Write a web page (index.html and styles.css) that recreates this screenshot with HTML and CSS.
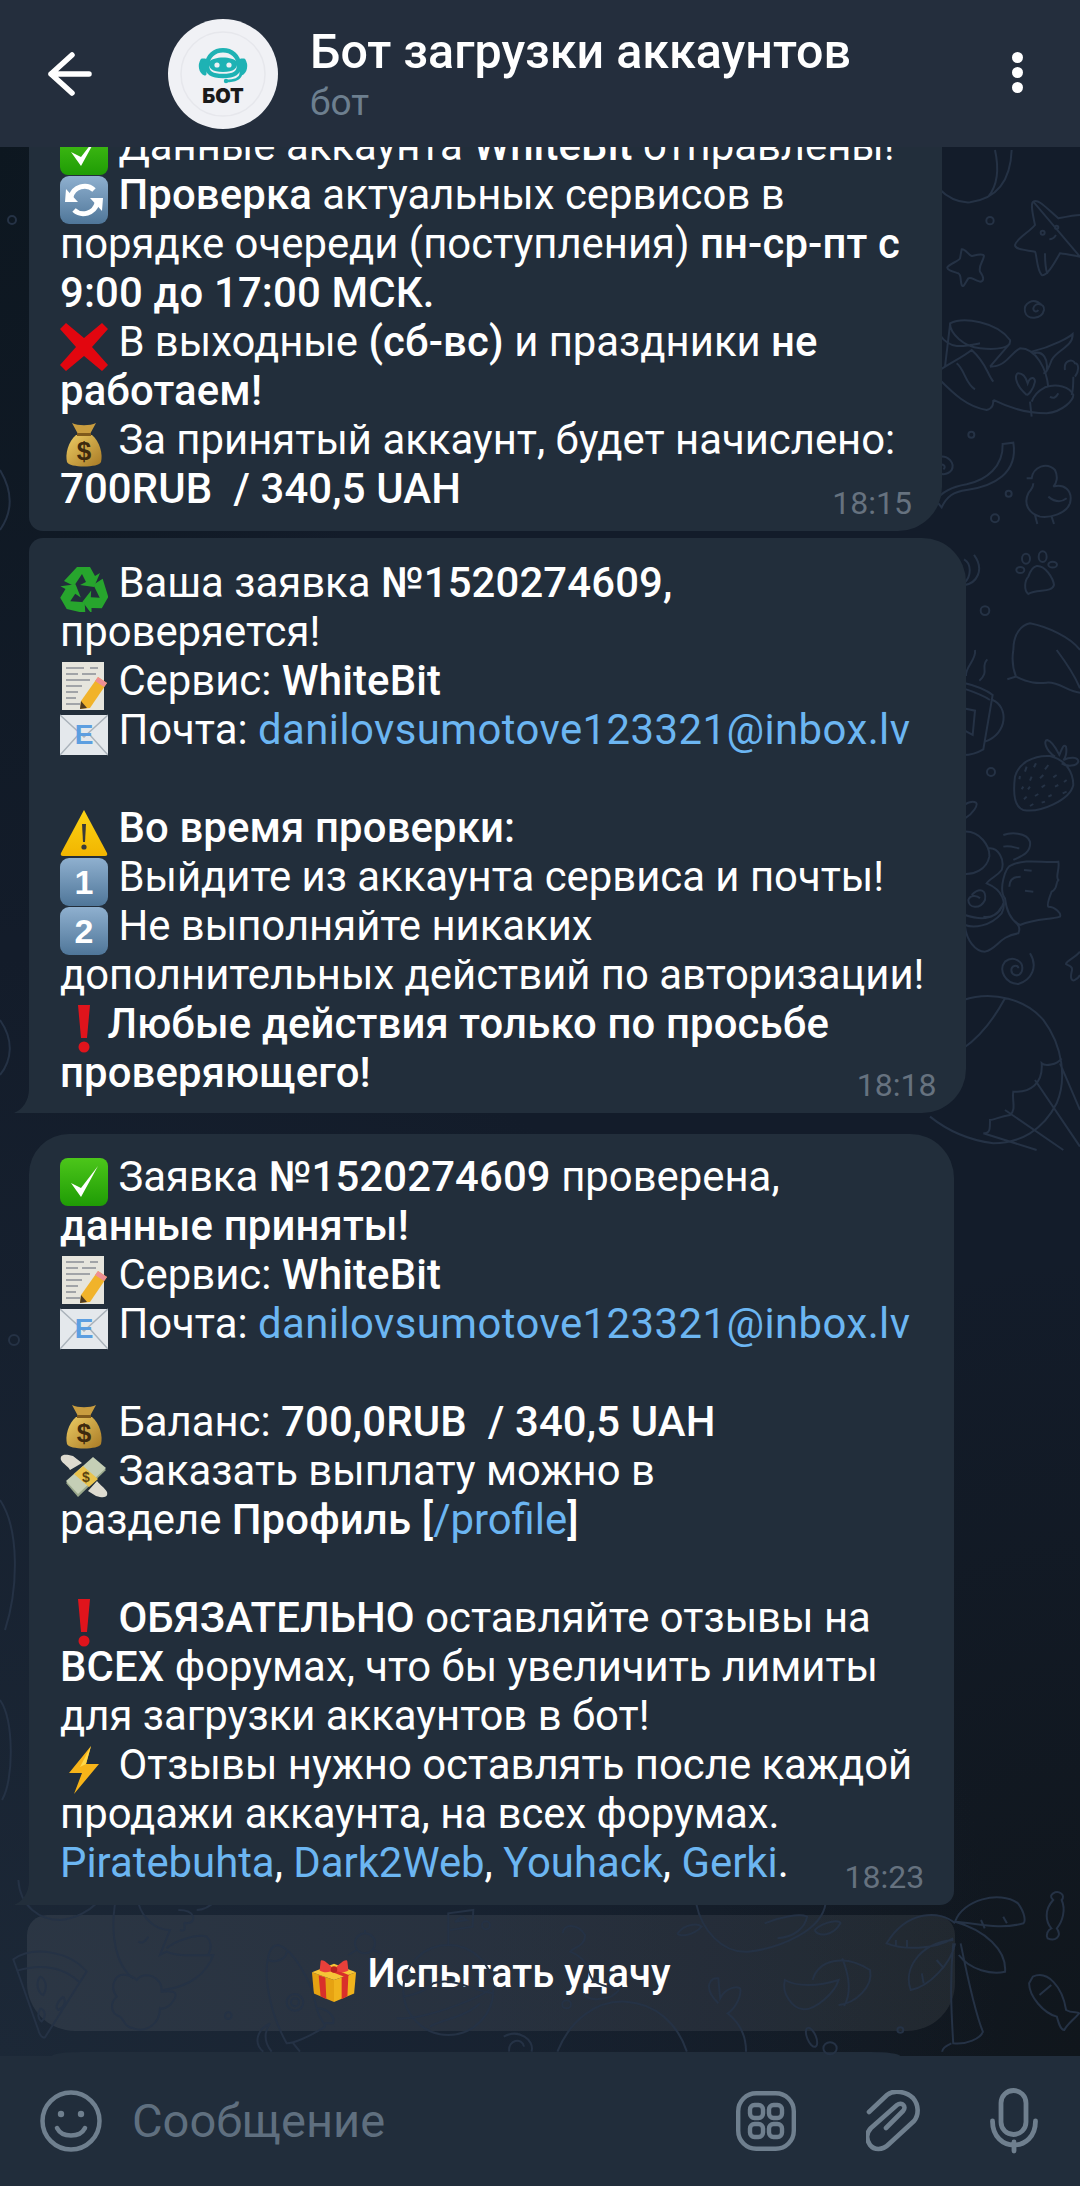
FILE: index.html
```html
<!DOCTYPE html>
<html lang="ru">
<head>
<meta charset="utf-8">
<title>Бот загрузки аккаунтов</title>
<link rel="stylesheet" href="styles.css">
</head>
<body>
<svg class="defs" aria-hidden="true">
  <defs>
    <linearGradient id="gGreen" x1="0" y1="0" x2="0" y2="1"><stop offset="0" stop-color="#4cc61a"/><stop offset="1" stop-color="#1f9c05"/></linearGradient>
    <linearGradient id="gKey" x1="0" y1="0" x2="0" y2="1"><stop offset="0" stop-color="#8fb0cf"/><stop offset="1" stop-color="#4f7699"/></linearGradient>
    <linearGradient id="gBag" x1="0" y1="0" x2="1" y2="1"><stop offset="0" stop-color="#eccb63"/><stop offset="1" stop-color="#a87a25"/></linearGradient>
    <linearGradient id="gYel" x1="0" y1="0" x2="0" y2="1"><stop offset="0" stop-color="#fbd415"/><stop offset="1" stop-color="#f2b500"/></linearGradient>
    <symbol id="e-check" viewBox="0 0 48 48"><rect x="0" y="0" width="48" height="48" rx="8" fill="url(#gGreen)"/><path d="M11 25 L21 39 L38 8 L21 30 Z" fill="#fff"/></symbol>
    <symbol id="e-cycle" viewBox="0 0 48 48"><rect x="0" y="0" width="48" height="48" rx="9" fill="url(#gKey)"/><path d="M11 21 A14 14 0 0 1 34 14" fill="none" stroke="#fff" stroke-width="5"/><path d="M37 27 A14 14 0 0 1 14 34" fill="none" stroke="#fff" stroke-width="5"/><path d="M6 13 L18 26 L5 26 Z M42 35 L30 22 L43 22 Z" fill="#fff"/></symbol>
    <symbol id="e-cross" viewBox="0 0 48 48"><path d="M6 0 L24 15 L42 0 L48 6 L32 24 L48 42 L42 48 L24 33 L6 48 L0 42 L16 24 L0 6 Z" fill="#e2060f"/></symbol>
    <symbol id="e-bag" viewBox="0 0 48 48"><path d="M16 14 C8 21 5 33 7 41 C9 47 39 47 41 41 C43 33 40 21 32 14 Z" fill="url(#gBag)"/><path d="M12 2 C18 5 30 5 36 2 L30 13 L18 13 Z" fill="#c99d3f"/><path d="M17 12 H31 V15 H17 Z" fill="#7f5a1c"/><text x="24" y="39" class="e-dollar">$</text></symbol>
    <symbol id="e-recycle" viewBox="0 0 48 48"><g fill="#27a52d"><path id="rc" d="M17 3 H30 L35 12 L40 9 L34 23 L20 21 L26 18 L22 10 L14 22 L4 17 Z"/><use href="#rc" transform="rotate(120 24 27)"/><use href="#rc" transform="rotate(240 24 27)"/></g></symbol>
    <symbol id="e-memo" viewBox="0 0 48 48"><rect x="2" y="0" width="42" height="48" fill="#e6e5dd"/><path d="M6 6 H24 M30 6 H38 M6 12 H18 M22 12 H36 M6 18 H30 M6 24 H22 M6 30 H18 M6 36 H16 M6 42 H20" stroke="#8b8f96" stroke-width="1.6" fill="none"/><path d="M38 15 L47 21 L30 46 L20 47 L21 39 Z" fill="#f1b32a"/><path d="M38 15 L47 21 L44 25 L35 19 Z" fill="#ef8f94"/><path d="M21 39 L20 47 L27 46 Z" fill="#4e3b22"/></symbol>
    <symbol id="e-mail" viewBox="0 0 48 48"><rect x="0" y="4" width="48" height="40" fill="#e4e8ec"/><path d="M0 4 L24 26 L48 4 M0 44 L19 23 M48 44 L29 23" stroke="#aab3bb" stroke-width="1.5" fill="none"/><text x="24" y="33" class="e-letter">E</text></symbol>
    <symbol id="e-warn" viewBox="0 0 48 48"><path d="M24 1 L47 44 Q48 47 45 47 H3 Q0 47 1 44 Z" fill="url(#gYel)"/><path d="M22 15 H26 L25 33 H23 Z" fill="#3a3a38"/><circle cx="24" cy="38" r="2.6" fill="#3a3a38"/></symbol>
    <symbol id="e-k1" viewBox="0 0 48 48"><rect x="0" y="0" width="48" height="48" rx="9" fill="url(#gKey)"/><text x="24" y="36" class="e-digit">1</text></symbol>
    <symbol id="e-k2" viewBox="0 0 48 48"><rect x="0" y="0" width="48" height="48" rx="9" fill="url(#gKey)"/><text x="24" y="36" class="e-digit">2</text></symbol>
    <symbol id="e-excl" viewBox="0 0 48 48"><path d="M18 0 H30 L27 33 H21 Z" fill="#e0141c"/><circle cx="24" cy="42" r="5.5" fill="#e0141c"/></symbol>
    <symbol id="e-fly" viewBox="0 0 48 48"><path d="M13 4 C2 1 0 4 1 8 C3 12 8 14 10 18 L22 11 Z M36 44 C46 47 48 44 47 40 C45 36 40 33 37 29 L28 39 Z" fill="#dedbd0"/><path d="M6 31 L33 7 L46 18 L18 45 Z" fill="#9aa88c"/><path d="M6 29 L33 5 L46 16 L18 42 Z" fill="#c5cfb6"/><path d="M14 22 L23 14 L38 27 L29 35 Z" fill="#e9c34d"/><text x="26" y="30" class="e-usd">$</text></symbol>
    <symbol id="e-bolt" viewBox="0 0 48 48"><path d="M31 0 L9 27 L22 27 L14 48 L39 18 L26 18 Z" fill="#f7b419"/><path d="M31 0 L26 18 L20 21 Z" fill="#ffd84a"/></symbol>
    <symbol id="e-gift" viewBox="0 0 48 48"><path d="M1 16 L24 24 L24 47 L3 38 Z" fill="#e6a212"/><path d="M47 16 L24 24 L24 47 L45 38 Z" fill="#f0b31c"/><path d="M1 16 L24 7 L47 16 L24 24 Z" fill="#f6c537"/><path d="M8 19 L15 21.5 L16 44 L10 41 Z M32 21 L39 19 L38 41 L32 44 Z" fill="#d92f2a"/><path d="M10 11 L36 21 L40 19 L16 9 Z" fill="#d92f2a"/><path d="M24 13 C16 4 10 1 10 5 L9 14 C14 17 20 16 24 13 C28 16 34 17 39 14 L38 5 C38 1 32 4 24 13 Z" fill="#e8403a"/><circle cx="24" cy="13" r="3.4" fill="#b9231f"/></symbol>
  </defs>
</svg>

<div class="phone">
  <header class="topbar">
    <svg class="back" viewBox="0 0 44 44"><path d="M3 22 H41 M24 3 L3 22 L24 41" fill="none" stroke="#fff" stroke-width="5.5" stroke-linecap="round" stroke-linejoin="round"/></svg>
    <svg class="avatar" viewBox="0 0 110 110">
      <circle cx="55" cy="55" r="55" fill="#f0f1f5"/>
      <circle cx="55" cy="55" r="42" fill="none" stroke="#e6e7ec" stroke-width="1.5"/>
      <path d="M39 47 C39 26 71 26 71 47 C71 54 66 57 55 57 C44 57 39 54 39 47 Z" fill="none" stroke="#1eb2b4" stroke-width="4.5"/>
      <path d="M41 43 C45 37 65 37 69 43 C70 49 66 53 55 53 C44 53 40 49 41 43 Z" fill="#1eb2b4"/>
      <circle cx="49" cy="46" r="2.6" fill="#f0f1f5"/><circle cx="61" cy="46" r="2.6" fill="#f0f1f5"/>
      <path d="M34 41 C31 46 32 53 37 55 L37 41 Z M76 41 C79 46 78 53 73 55 L73 41 Z" fill="#1eb2b4" stroke="#1eb2b4" stroke-width="3" stroke-linejoin="round"/>
      <path d="M73 55 C72 60 66 62 58 62" fill="none" stroke="#1eb2b4" stroke-width="2.5"/>
      <circle cx="58" cy="62" r="2.2" fill="#1eb2b4"/>
      <text x="55" y="84" class="avatar-label">БОТ</text>
    </svg>
    <div class="peer">
      <div class="peer-name">Бот загрузки аккаунтов</div>
      <div class="peer-status">бот</div>
    </div>
    <div class="dots"><i></i><i></i><i></i></div>
  </header>

  <main class="chat">
    <svg class="doodles" viewBox="0 147 1080 1909" aria-hidden="true">
      <g transform="translate(930,150) scale(0.3333)">
        <path d="M25 115 Q70 160 120 157 Q240 140 245 0 M175 140 Q215 90 195 0"/>
        <path d="M310 155 C325 145 350 175 385 205 C410 200 440 195 450 195 M450 320 C420 315 395 310 390 310 C370 345 350 380 335 375 C320 360 320 310 315 305 C290 300 255 300 255 285 C260 265 300 245 315 225 C310 200 300 160 310 155 Z M358 268 Q370 268 378 255 M345 310 Q345 350 352 372"/>
        <circle cx="338" cy="248" r="6"/><circle cx="380" cy="232" r="5"/>
        <path d="M95 298 C105 295 115 315 125 318 C140 315 160 310 162 318 C160 335 145 345 150 365 C165 385 160 395 150 395 C130 390 125 380 115 385 C105 400 100 415 95 405 C90 390 95 375 85 370 C70 365 50 360 52 352 C60 340 85 335 90 325 Z"/>
        <circle cx="180" cy="212" r="11"/>
        <path d="M335 465 C310 440 280 460 285 485 C290 510 335 510 342 480 C345 460 315 455 310 475 C310 485 320 488 325 480"/>
        <path d="M60 520 C100 500 200 515 240 570 C245 595 200 600 150 595 C100 590 60 550 60 520 Z M60 525 L45 650 M240 580 L180 650 M30 555 C60 600 100 590 150 580 M30 660 C60 640 100 620 125 600 C170 640 170 670 190 695 M80 640 C105 660 105 700 135 718 M30 690 C70 730 110 770 170 780 C190 775 190 760 190 750 M190 750 C250 780 300 790 350 790 C400 785 430 750 430 735 C420 710 380 700 345 712 C320 725 310 740 305 755 M180 650 C230 650 240 610 270 595 C320 595 350 660 355 712 M305 605 C370 590 420 560 428 552 C430 590 380 600 365 630 C350 670 345 670 340 670 M310 610 C340 600 355 630 350 660"/>
        <path d="M290 735 C250 700 255 670 265 670 C285 670 290 690 293 700 C300 680 315 680 315 695 C310 720 295 735 290 735 M405 660 C400 630 430 625 435 640 C445 640 450 660 435 680 M430 680 C430 710 430 720 425 735 M300 755 L305 800 M360 740 Q375 750 385 730"/>
        <circle cx="124" cy="854" r="9"/><circle cx="236" cy="1031" r="9"/><circle cx="195" cy="1105" r="12"/><circle cx="165" cy="1382" r="13"/>
        <path d="M218 882 L250 878 C265 970 190 1010 110 1020 C70 1025 50 1040 35 1072 L18 1052 C35 1025 70 1010 110 1003 C170 990 220 950 218 882 Z"/>
        <path d="M28 920 C55 915 75 940 65 960 C50 980 28 970 28 970 M28 945 C40 940 50 950 40 958"/>
        <path d="M290 985 L305 985 C310 950 350 935 375 960 C385 980 380 1000 370 1010 C400 1000 430 1020 420 1060 C410 1090 360 1105 330 1100 C295 1090 280 1060 295 1030 C305 1015 310 1015 310 1000 M355 1040 Q385 1065 410 1045 M315 1095 L322 1122 M365 1100 L372 1122"/>
        <path d="M320 1248 C345 1245 370 1285 372 1305 C365 1330 320 1315 295 1332 C280 1320 285 1290 295 1280 C300 1265 310 1250 320 1248 Z"/>
        <ellipse cx="288" cy="1226" rx="12" ry="15"/><ellipse cx="338" cy="1220" rx="12" ry="16"/><ellipse cx="368" cy="1244" rx="13" ry="9"/><ellipse cx="271" cy="1260" rx="12" ry="9"/>
        <path d="M102 1228 C125 1240 125 1280 102 1300 M132 1215 C165 1260 140 1300 102 1306 M250 1500 C250 1450 275 1425 300 1420 C350 1430 420 1460 450 1500"/>
      </g>
      <g transform="translate(930,650) scale(0.3333)">
        <path d="M250 0 C245 30 250 60 258 80 M232 88 L258 80 C300 100 320 100 350 98 C390 95 410 125 450 128 M380 0 C410 40 440 90 450 115"/>
        <path d="M100 98 C130 105 170 120 188 135 L160 298 C140 310 120 315 100 315 M188 150 C235 170 235 250 165 275 M100 115 C130 125 160 135 180 150 M100 175 L135 182 L128 255 L100 240"/>
        <path d="M135 0 C140 30 105 50 108 78 M172 28 C150 50 180 65 148 92"/>
        <path d="M360 318 C410 330 430 370 430 405 C420 450 330 490 280 480 C250 470 250 420 255 380 C265 340 310 315 360 318 Z M375 320 C345 300 340 270 352 270 C370 275 385 310 388 315 C395 300 400 280 408 290 C412 310 405 325 400 330 C420 320 445 320 445 335 C440 350 410 350 395 340 M290 350 L285 365 M318 340 L312 352 M355 345 L345 358 M270 378 L268 388 M305 380 L300 392 M340 375 L330 385 M380 375 L370 382 M280 410 L275 418 M300 410 L294 418 M345 405 L335 412 M385 405 L375 410 M410 390 L402 396 M290 440 L282 448 M325 432 L315 438 M365 435 L355 440 M410 425 L398 430 M310 462 L300 468 M345 455 L335 458"/>
        <circle cx="183" cy="366" r="12"/>
        <path d="M105 505 C130 490 145 465 138 458 C125 450 110 460 102 465 M100 545 C150 540 180 590 178 620 C170 660 130 675 100 672 M175 595 C205 590 225 630 215 660 C200 680 180 685 170 700 C220 720 230 760 215 790 C180 830 130 835 105 825 M105 830 C110 870 135 905 165 905 C205 895 205 860 265 850 C275 830 260 820 255 815"/>
        <path d="M245 645 C290 625 340 640 385 635 C390 660 375 680 385 690 C375 700 385 715 365 725 C355 750 350 765 355 770 C375 770 395 790 390 800 C360 810 320 805 270 825 C250 815 230 790 225 745 C205 720 225 650 245 645 Z M282 660 L305 662 M285 722 L310 725 M238 710 C238 690 250 680 272 680"/>
        <path d="M220 555 C240 548 290 545 300 575 C305 610 270 620 250 630 M220 590 C240 585 260 595 268 595"/>
        <path d="M125 735 C150 710 170 720 165 750 C150 780 115 775 115 750 C120 735 140 735 150 745 M105 795 C150 810 195 810 215 770 M160 800 C180 805 210 795 220 760"/>
        <path d="M300 910 C325 950 305 990 265 1002 C225 1000 205 960 225 935 C250 915 285 935 275 965 C265 985 240 975 245 955 C250 945 265 945 265 955"/>
        <path d="M450 905 C435 925 410 930 408 942 C420 950 430 950 425 965 C420 985 425 995 435 990 C445 985 450 975 450 975"/>
        <path d="M100 1050 C190 1020 290 1050 340 1110 C400 1190 410 1290 380 1360 C340 1440 270 1480 190 1480 C110 1470 50 1440 0 1400 M225 1045 C190 1110 150 1160 100 1195 M395 1225 C380 1245 345 1250 335 1240 C340 1300 300 1330 250 1325 C245 1350 260 1380 240 1395 C210 1400 190 1410 180 1410 C180 1440 180 1450 160 1450 M390 1240 L450 1380 M315 1290 L450 1490 M225 1380 L400 1500 M160 1450 L320 1500"/>
      </g>
      <g transform="translate(0,1880) scale(0.3333)">
        <path d="M55 0 C60 80 120 120 180 120 C230 115 270 90 290 70"/>
        <path d="M40 238 C100 195 210 215 260 275 L135 472 C130 475 120 470 115 450 Z M52 272 C110 255 180 255 237 305 M120 290 C105 310 115 340 130 345 C145 320 135 295 120 290 M190 350 C170 365 165 385 175 390 C190 385 200 365 190 350 M122 385 C110 400 115 420 125 425 C140 410 135 390 122 385"/>
        <path d="M345 70 C330 170 350 260 400 295 M415 70 C430 120 470 150 510 150 L480 225 L500 215 C530 230 580 225 640 225 C620 280 570 320 490 330 M500 205 C520 185 590 160 620 170 C640 190 630 215 625 225 M535 90 C590 90 590 130 560 130 C540 120 570 160 540 150 M590 90 C620 90 640 70 650 60 M415 185 Q430 195 445 170"/>
        <path d="M345 300 C360 270 400 290 410 300 C430 270 490 290 485 335 C530 330 540 340 510 375 C490 390 480 385 480 385 C480 430 440 460 400 445 C370 440 375 420 360 410 C330 400 330 370 350 350 C335 330 340 310 345 300 Z"/>
        <circle cx="685" cy="407" r="10"/><circle cx="1458" cy="136" r="12"/>
        <path d="M835 195 C880 210 935 300 950 385 C960 425 975 425 975 440 C930 470 880 490 860 490 C810 400 790 290 805 230 C810 205 820 195 835 195 Z M805 240 C830 250 860 235 860 215 M950 385 C985 385 1005 410 1000 430 L975 430 M810 430 C770 450 760 490 790 515 M810 430 C790 460 795 490 815 515 M880 490 L900 515"/>
        <circle cx="885" cy="367" r="25"/><circle cx="885" cy="367" r="12"/>
        <circle cx="1345" cy="330" r="135"/>
        <path d="M1345 195 L1345 100 L1420 90 L1418 140 L1350 150 M1365 125 L1385 110 L1400 120 Z M1210 350 C1270 340 1290 320 1300 310 C1360 290 1410 330 1480 340 M1190 415 C1280 420 1450 350 1480 320 M1290 440 C1320 420 1400 410 1440 370"/>
        <circle cx="1095" cy="190" r="30"/><path d="M1095 160 L1095 150 M1120 210 L1145 220 M1070 210 L1045 225"/>
      </g>
      <g transform="translate(500,1880) scale(0.37,0.3333)">
        <path d="M530 70 C545 150 600 220 670 215 C760 205 870 150 880 70 M480 160 C500 130 535 130 545 140 C520 170 480 170 480 160 M715 130 C760 110 810 100 830 110 C825 140 800 170 750 175 M850 150 C880 120 920 120 920 130 C900 170 860 170 850 150"/>
        <path d="M1230 125 C1250 60 1350 30 1400 70 C1420 100 1420 125 1415 130 C1350 150 1290 130 1230 125 Z M1230 125 C1310 150 1370 210 1365 275 C1330 285 1270 270 1240 225 M1230 130 C1190 90 1100 90 1045 190 C1090 210 1170 210 1225 175 M1225 180 C1130 190 1090 270 1110 330 C1160 320 1220 250 1230 190 M1225 190 C1215 300 1220 400 1225 490 C1260 495 1300 475 1305 455 C1285 400 1265 300 1245 190 M1300 120 L1310 145 M1360 110 L1370 130 M1070 180 L1070 200 M1100 180 L1100 205 M1180 240 L1200 265 M1140 280 L1145 310 M1220 490 C1200 500 1195 510 1195 515"/>
        <path d="M1495 40 C1510 30 1530 45 1518 60 C1530 90 1520 125 1505 145 C1520 170 1500 185 1480 175 C1475 165 1480 150 1490 145 C1475 125 1470 90 1495 60 C1485 50 1490 45 1495 40 Z"/>
        <path d="M1440 290 C1480 270 1520 320 1530 390 C1545 400 1560 395 1565 400 C1550 420 1535 430 1525 450 C1515 450 1510 430 1505 410 C1470 400 1430 350 1430 310 Z M1490 315 L1458 345"/>
        <path d="M770 300 C800 320 860 320 915 300 C905 340 850 390 820 388 C790 385 760 340 770 300 Z M845 300 C860 240 930 220 1000 270 C1010 320 960 370 915 375 M925 235 C945 290 950 340 930 378"/>
        <path d="M155 515 C190 420 260 360 340 365 C420 370 480 430 505 515 M590 370 C545 320 570 290 590 295 L595 355 C610 320 650 315 650 330 C650 360 630 390 615 400 C650 430 665 470 665 515"/>
        <path d="M170 160 C170 130 210 130 230 165 C230 200 200 200 190 215 C240 240 230 260 250 300 C300 340 350 310 300 350 C270 360 240 365 225 340"/>
        <path d="M10 470 C50 445 95 480 85 515 M25 515 C20 480 60 470 65 500"/>
        <ellipse cx="842" cy="472" rx="12" ry="30" transform="rotate(-20 842 472)"/>
        <circle cx="892" cy="505" r="18"/><circle cx="180" cy="373" r="12"/><circle cx="1082" cy="450" r="8"/>
      </g>
      <g class="doodle-left">
        <path d="M0 470 C12 490 14 510 0 530 M0 1020 C14 1040 12 1060 0 1075 M0 1500 C20 1530 18 1590 5 1630 M0 1700 C14 1720 14 1780 2 1800"/>
        <circle cx="12" cy="220" r="4"/><circle cx="14" cy="1340" r="5"/>
      </g>
    </svg>

    <article class="bubble">
      <p class="msg"><svg class="em"><use href="#e-check"/></svg> Данные аккаунта <b>WhiteBit</b> отправлены!<br>
      <svg class="em"><use href="#e-cycle"/></svg> <b>Проверка</b> актуальных сервисов в<br>
      порядке очереди (поступления) <b>пн-ср-пт с<br>
      9:00 до 17:00 МСК.</b><br>
      <svg class="em"><use href="#e-cross"/></svg> В выходные <b>(сб-вс)</b> и праздники <b>не<br>
      работаем!</b><br>
      <svg class="em"><use href="#e-bag"/></svg> За принятый аккаунт, будет начислено:<br>
      <b>700RUB&nbsp; / 340,5 UAH</b></p>
      <time class="stamp">18:15</time>
    </article>

    <article class="bubble bubble-tail bubble-second">
      <p class="msg"><svg class="em"><use href="#e-recycle"/></svg> Ваша заявка <b>№1520274609,</b><br>
      проверяется!<br>
      <svg class="em"><use href="#e-memo"/></svg> Сервис: <b>WhiteBit</b><br>
      <svg class="em"><use href="#e-mail"/></svg> Почта: <a class="mail">danilovsumotove123321@inbox.lv</a><br>
      <br>
      <svg class="em"><use href="#e-warn"/></svg> <b>Во время проверки:</b><br>
      <svg class="em"><use href="#e-k1"/></svg> Выйдите из аккаунта сервиса и почты!<br>
      <svg class="em"><use href="#e-k2"/></svg> Не выполняйте никаких<br>
      дополнительных действий по авторизации!<br>
      <svg class="em em-narrow"><use href="#e-excl"/></svg> <b>Любые действия только по просьбе<br>
      проверяющего!</b></p>
      <time class="stamp">18:18</time>
    </article>

    <article class="bubble bubble-tail bubble-third">
      <p class="msg"><svg class="em"><use href="#e-check"/></svg> Заявка <b>№1520274609</b> проверена,<br>
      <b>данные приняты!</b><br>
      <svg class="em"><use href="#e-memo"/></svg> Сервис: <b>WhiteBit</b><br>
      <svg class="em"><use href="#e-mail"/></svg> Почта: <a class="mail">danilovsumotove123321@inbox.lv</a><br>
      <br>
      <svg class="em"><use href="#e-bag"/></svg> Баланс: <b>700,0RUB&nbsp; / 340,5 UAH</b><br>
      <svg class="em"><use href="#e-fly"/></svg> Заказать выплату можно в<br>
      разделе <b>Профиль [</b><a>/profile</a><b>]</b><br>
      <br>
      <svg class="em"><use href="#e-excl"/></svg> <b>ОБЯЗАТЕЛЬНО</b> оставляйте отзывы на<br>
      <b>ВСЕХ</b> форумах, что бы увеличить лимиты<br>
      для загрузки аккаунтов в бот!<br>
      <svg class="em"><use href="#e-bolt"/></svg> Отзывы нужно оставлять после каждой<br>
      продажи аккаунта, на всех форумах.<br>
      <a>Piratebuhta</a>, <a>Dark2Web</a>, <a>Youhack</a>, <a>Gerki</a>.</p>
      <time class="stamp">18:23</time>
    </article>

    <button class="kb-btn"><svg class="em em-gift"><use href="#e-gift"/></svg> Испытать удачу</button>
    <div class="kb-next"></div>
  </main>

  <footer class="composer">
    <svg class="ic-smile" viewBox="0 0 62 62"><circle cx="31" cy="31" r="28.5" fill="none" stroke-width="4.5"/><circle cx="21" cy="24" r="3.2" class="ic-fill"/><circle cx="41" cy="24" r="3.2" class="ic-fill"/><path d="M17 38 C22 48 40 48 45 38" fill="none" stroke-width="4.5" stroke-linecap="round"/></svg>
    <div class="placeholder">Сообщение</div>
    <svg class="ic-grid" viewBox="0 0 60 60"><rect x="2.2" y="2.2" width="55.6" height="55.6" rx="18" fill="none" stroke-width="4.4"/><rect x="14" y="14" width="13" height="13" rx="4.5" fill="none" stroke-width="4.4"/><rect x="33" y="14" width="13" height="13" rx="4.5" fill="none" stroke-width="4.4"/><rect x="14" y="33" width="13" height="13" rx="4.5" fill="none" stroke-width="4.4"/><rect x="33" y="33" width="13" height="13" rx="4.5" fill="none" stroke-width="4.4"/></svg>
    <svg class="ic-clip" viewBox="0 0 54 62"><path d="M3 22 L21 5 C28 -1 41 2 47 8 C53 15 53 25 48 31 L23 54 C16 61 8 60 4 55 C0 49 0 43 5 38 L31 15 C36 11 41 17 37 21 L20 38" fill="none" stroke-width="4.6" stroke-linecap="round" stroke-linejoin="round"/></svg>
    <svg class="ic-mic" viewBox="0 0 48 66"><rect x="11" y="2.5" width="25" height="44" rx="12.5" fill="none" stroke-width="4.8"/><path d="M2.5 33 C2.5 65 45.5 65 45.5 33 M24 54 V63" fill="none" stroke-width="4.8" stroke-linecap="round"/></svg>
  </footer>
</div>
</body>
</html>
```

FILE: styles.css
```css
* { box-sizing: border-box; }
html, body { margin: 0; padding: 0; background: #0f1823; }
body { font-family: Roboto, "Noto Sans", "Liberation Sans", sans-serif; color: #fff; }

.defs { position: absolute; width: 0; height: 0; }
.e-dollar, .e-letter, .e-digit, .e-usd { font-family: "Liberation Sans", Roboto, sans-serif; font-weight: 700; text-anchor: middle; }
.e-dollar { font-size: 26px; fill: #3d2a0e; }
.e-letter { font-size: 28px; fill: #5c9ee0; }
.e-digit { font-size: 34px; fill: #fff; }
.e-usd { font-size: 14px; fill: #5b4310; }

.phone { width: 1080px; height: 2186px; display: flex; flex-direction: column; overflow: hidden; }

.topbar { flex: none; height: 147px; background: #242e3d; display: flex; align-items: flex-start; }
.back { flex: none; width: 44px; height: 44px; margin: 52px 0 0 48px; }
.avatar { flex: none; width: 110px; height: 110px; margin: 19px 0 0 76px; }
.avatar-label { font-family: Inter, Roboto, sans-serif; font-weight: 900; font-size: 20px; text-anchor: middle; fill: #1a1a1a; }
.peer { flex: none; width: 700px; margin-left: 32px; padding-top: 24px; }
.peer-name { font-size: 48.4px; line-height: 56px; font-weight: 500; white-space: nowrap; }
.peer-status { font-size: 37px; line-height: 44px; margin-top: 1px; color: #6d7f8f; }
.dots { flex: none; display: flex; flex-direction: column; gap: 4px; margin: 52px 0 0 2px; }
.dots i { display: block; width: 11px; height: 11px; border-radius: 50%; background: #fff; }

.chat {
  flex: 1 1 auto; min-height: 0; position: relative; overflow: hidden;
  display: flex; flex-direction: column; justify-content: flex-end; align-items: flex-start;
  background:
    radial-gradient(1000px 1100px at 0 100%, #1c2837 0, rgba(28,40,55,0) 100%),
    radial-gradient(600px 800px at 100% 100%, #10161c 0, rgba(16,22,28,0) 100%),
    radial-gradient(400px 800px at 0 0, #0d1720 0, rgba(13,23,32,0) 100%),
    #131c2a;
}
.doodles { position: absolute; left: 0; top: 0; width: 1080px; height: 1909px; fill: none; stroke: #253245; stroke-width: 2; }
.doodles path, .doodles circle, .doodles ellipse { vector-effect: non-scaling-stroke; }

.bubble {
  flex: none; position: relative; margin-left: 29px; padding: 18px 42px 18px 31px;
  background: #222e3b; border-radius: 14px 44px 44px 14px;
}
.bubble-tail { border-radius: 14px 44px 44px 0; }
.bubble-tail::before {
  content: ""; position: absolute; left: -15px; bottom: 0; width: 16px; height: 24px;
  background: #222e3b; clip-path: path("M0 24 C8 21 15 12 15 0 L16 0 L16 24 Z");
}
.bubble-second { margin-top: 7px; padding-top: 20px; padding-bottom: 16px; }
.bubble-third { margin-top: 21px; border-radius: 40px 44px 14px 0; }
.msg { margin: 0; font-size: 41.85px; line-height: 49px; white-space: nowrap; font-weight: 400; }
.msg b { font-weight: 500; letter-spacing: 0.15px; }
.msg a { color: #6cb6f2; }
.msg .mail { letter-spacing: 0.45px; }
.em { display: inline-block; width: 48px; height: 48px; margin-block: -10px; vertical-align: -5px; }
.em-narrow { margin-right: -11px; }
.stamp { position: absolute; right: 30px; bottom: 10px; font-size: 32px; line-height: 36px; color: #66727f; }

.kb-btn {
  flex: none; margin: 10px 0 0 27px; width: 928px; height: 116px; padding: 0; border: 0;
  border-radius: 20px 20px 48px 48px; background: rgba(255,255,255,0.07);
  color: #fff; font: 500 40px/49px Roboto, "Noto Sans", sans-serif;
}
.em-gift { width: 46px; height: 46px; vertical-align: -6px; }
.kb-next { flex: none; margin: 21px 0 0 52px; width: 848px; height: 4px; border-radius: 30px 30px 0 0 / 4px 4px 0 0; background: #212d3b; }

.composer { flex: none; height: 130px; background: #212d3b; display: flex; align-items: center; padding-left: 40px; }
.composer svg { flex: none; stroke: #6f7f8e; }
.ic-smile { width: 62px; height: 62px; }
.composer svg .ic-fill { fill: #6f7f8e; stroke: none; }
.placeholder { flex: none; width: 604px; margin-left: 30px; font-size: 47px; line-height: 54px; color: #5f6f7f; }
.ic-grid { width: 60px; height: 60px; }
.ic-clip { width: 54px; height: 62px; margin-left: 70px; }
.ic-mic { width: 48px; height: 66px; margin-left: 70px; }
```
